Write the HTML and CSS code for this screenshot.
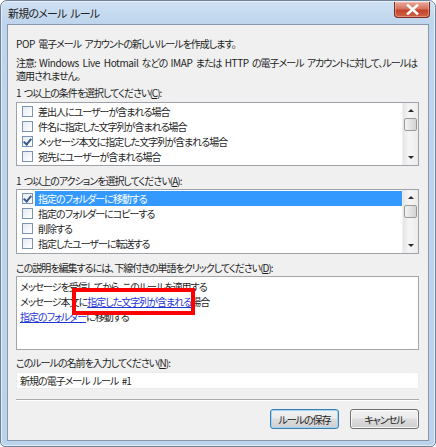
FILE: index.html
```html
<!DOCTYPE html>
<html lang="ja">
<head>
    <meta charset="UTF-8">
    <title>新規のメール ルール</title>
    <link rel="stylesheet" href="styles.css">
</head>
<body>
    <div class="window">
        <div class="titlebar">
            <span class="title">新規のメール ルール</span>
            <button class="close" type="button" aria-label="閉じる">
                <svg width="13" height="11" viewBox="0 0 13 11">
                    <path d="M2 1.5 L11 9.5 M11 1.5 L2 9.5" stroke="#fff" stroke-width="2.6" stroke-linecap="square"/>
                </svg>
            </button>
        </div>

        <div class="client">
            <p class="intro"><span class="en">POP</span> 電子メール アカウントの新しいルールを作成します。</p>
            <p class="note">注意: <span class="en">Windows Live Hotmail</span> などの <span class="en">IMAP</span> または <span class="en">HTTP</span> の電子メール アカウントに対して、ルールは<br>適用されません。</p>

            <div class="label">1 つ以上の条件を選択してください(<u>C</u>):</div>
            <div class="listbox">
                <ul class="items">
                    <li><span class="check"></span><span class="text">差出人にユーザーが含まれる場合</span></li>
                    <li><span class="check"></span><span class="text">件名に指定した文字列が含まれる場合</span></li>
                    <li><span class="check checked"></span><span class="text">メッセージ本文に指定した文字列が含まれる場合</span></li>
                    <li><span class="check"></span><span class="text">宛先にユーザーが含まれる場合</span></li>
                </ul>
                <div class="scrollbar">
                    <div class="arrow up"></div>
                    <div class="track"><div class="thumb"></div></div>
                    <div class="arrow down"></div>
                </div>
            </div>

            <div class="label gap-a">1 つ以上のアクションを選択してください(<u>A</u>):</div>
            <div class="listbox tall">
                <ul class="items">
                    <li class="selected"><span class="check checked"></span><span class="text">指定のフォルダーに移動する</span></li>
                    <li><span class="check"></span><span class="text">指定のフォルダーにコピーする</span></li>
                    <li><span class="check"></span><span class="text">削除する</span></li>
                    <li><span class="check"></span><span class="text">指定したユーザーに転送する</span></li>
                </ul>
                <div class="scrollbar">
                    <div class="arrow up"></div>
                    <div class="track"><div class="thumb"></div></div>
                    <div class="arrow down"></div>
                </div>
            </div>

            <div class="label gap-d">この説明を編集するには、下線付きの単語をクリックしてください(<u>D</u>):</div>
            <div class="description">
                <div>メッセージを受信してから、このルールを適用する</div>
                <div>メッセージ本文に<a href="#">指定した文字列が含まれる</a>場合</div>
                <div><a href="#">指定のフォルダー</a>に移動する</div>
                <span class="marker"></span>
            </div>

            <div class="label gap-n">このルールの名前を入力してください(<u>N</u>):</div>
            <input class="name" type="text" value="新規の電子メール ルール #1">

            <div class="separator"></div>

            <div class="buttons">
                <button class="btn default" type="button">ルールの保存</button>
                <button class="btn" type="button">キャンセル</button>
            </div>
        </div>
    </div>
</body>
</html>
```

FILE: styles.css
```css
:root {
    --frame: #bcd3ec;
    --client-bg: #f0f0f0;
    --text: #1e1e1e;
    --border: #9ea3aa;
    --highlight: #3399ff;
    --link: #1f35d6;
}

body {
    margin: 0;
    font-family: "Noto Sans CJK JP", "Noto Sans", sans-serif;
    font-size: 10px;
    letter-spacing: -1px;
    word-spacing: 2px;
    font-feature-settings: "palt" 1;
    color: var(--text);
    background: #ffffff;
}

p {
    margin: 0;
}

/* latin words keep near-normal tracking */
.en {
    letter-spacing: -0.4px;
}

.window {
    width: 436px;
    height: 447px;
    box-sizing: border-box;
    border: 1px solid #6f8299;
    border-radius: 7px 7px 5px 5px;
    background: linear-gradient(#cfe0f3, #bfd5ed 22px, var(--frame));
    box-shadow: inset 0 0 0 1px rgba(255, 255, 255, 0.55);
    padding: 0 6px 5px;
    display: flex;
    flex-direction: column;
    overflow: hidden;
}

.titlebar {
    height: 23px;
    display: flex;
    justify-content: space-between;
    align-items: flex-start;
}

.title {
    padding: 5px 0 0 1px;
    font-size: 11px;
    letter-spacing: -0.8px;
    line-height: 15px;
    color: #222;
}

.close {
    width: 36px;
    height: 16px;
    margin: 1px -1px 0 0;
    padding: 0;
    border: 1px solid #7a2b22;
    border-top: none;
    border-radius: 0 0 4px 4px;
    background: linear-gradient(#e9a898, #d6735f 45%, #c3432c 55%, #cf6247);
    box-shadow: inset 0 0 0 1px rgba(255, 200, 190, 0.45);
    display: flex;
    align-items: center;
    justify-content: center;
}

.client {
    flex-grow: 1;
    min-width: 0;
    background: var(--client-bg);
    border: 1px solid #8797ac;
    padding: 0 9px 0 8px;
    display: flex;
    flex-direction: column;
}

.intro {
    margin-top: 11px;
    line-height: 15px;
}

.note {
    margin-top: 5px;
    line-height: 13px;
    white-space: nowrap;
}

.label {
    margin-top: 3px;
    line-height: 15px;
    white-space: nowrap;
}

.label u {
    text-underline-offset: 1px;
}

.gap-a { margin-top: 7px; }
.gap-d { margin-top: 6px; }
.gap-n { margin-top: 5px; }

/* check list with its own scrollbar */
.listbox {
    margin-top: 2px;
    height: 64px;
    box-sizing: border-box;
    border: 1px solid var(--border);
    background: #fff;
    display: flex;
}

.listbox.tall {
    margin-top: 1px;
    height: 65px;
}

.items {
    list-style: none;
    margin: 0;
    padding: 1px 0 0;
    flex-grow: 1;
}

.items li {
    height: 15px;
    display: flex;
    align-items: center;
    white-space: nowrap;
}

.items .text {
    padding-left: 3px;
    line-height: 15px;
    flex-grow: 1;
}

.items li.selected .text {
    background: var(--highlight);
    color: #fff;
}

.check {
    width: 11px;
    height: 11px;
    box-sizing: border-box;
    margin: 0 2px 0 5px;
    border: 1px solid #7b93b4;
    background: linear-gradient(135deg, #e6ebf1, #ffffff);
    flex-shrink: 0;
    position: relative;
}

.check.checked::after {
    content: "";
    position: absolute;
    left: 2px;
    top: 0;
    width: 3px;
    height: 6px;
    border: solid #3a5a8c;
    border-width: 0 2px 2px 0;
    transform: rotate(40deg);
}

.scrollbar {
    width: 15px;
    background: linear-gradient(90deg, #e6e6e6, #f5f5f5 40%, #ececec);
    border-left: 1px solid #efefef;
    display: flex;
    flex-direction: column;
}

.arrow {
    height: 15px;
    display: flex;
    align-items: center;
    justify-content: center;
}

.arrow::before {
    content: "";
    border-left: 3px solid transparent;
    border-right: 3px solid transparent;
}

.arrow.up::before {
    border-bottom: 3px solid #2a2a2a;
}

.arrow.down::before {
    border-top: 3px solid #2a2a2a;
}

.track {
    flex-grow: 1;
}

.thumb {
    margin: 0 1px;
    height: 13px;
    border: 1px solid #999;
    border-radius: 2px;
    box-sizing: border-box;
    background: linear-gradient(90deg, #f3f3f3, #e2e2e2 50%, #d3d3d3);
}

/* rule description */
.description {
    position: relative;
    margin-top: 1px;
    height: 74px;
    box-sizing: border-box;
    border: 1px solid #a5a5a5;
    background: #fff;
    padding: 2px 3px 0;
    line-height: 15px;
}

.description a {
    color: var(--link);
    text-decoration: underline;
}

.marker {
    position: absolute;
    left: 55px;
    top: 11px;
    width: 123px;
    height: 27px;
    box-sizing: border-box;
    border: 4px solid #ff0000;
}

.name {
    margin: 2px 0 0;
    height: 17px;
    box-sizing: border-box;
    border: 1px solid #ececec;
    background: #fff;
    padding: 0 3px;
    font: inherit;
    letter-spacing: inherit;
    word-spacing: inherit;
    color: var(--text);
}

.separator {
    margin-top: 10px;
    border-top: 1px solid #a9a9a9;
    border-bottom: 1px solid #fff;
}

.buttons {
    margin-top: 8px;
    display: flex;
    justify-content: flex-end;
    gap: 11px;
}

.btn {
    width: 69px;
    height: 20px;
    padding: 0;
    font: inherit;
    letter-spacing: inherit;
    color: var(--text);
    border: 1px solid #707070;
    border-radius: 3px;
    background: linear-gradient(#f2f2f2, #ebebeb 45%, #dddddd 50%, #cfcfcf);
    box-shadow: inset 0 0 0 1px rgba(255, 255, 255, 0.8);
}

.btn.default {
    border-color: #3c7fb1;
    box-shadow: inset 0 0 0 1px #9fd4f5;
}
```
